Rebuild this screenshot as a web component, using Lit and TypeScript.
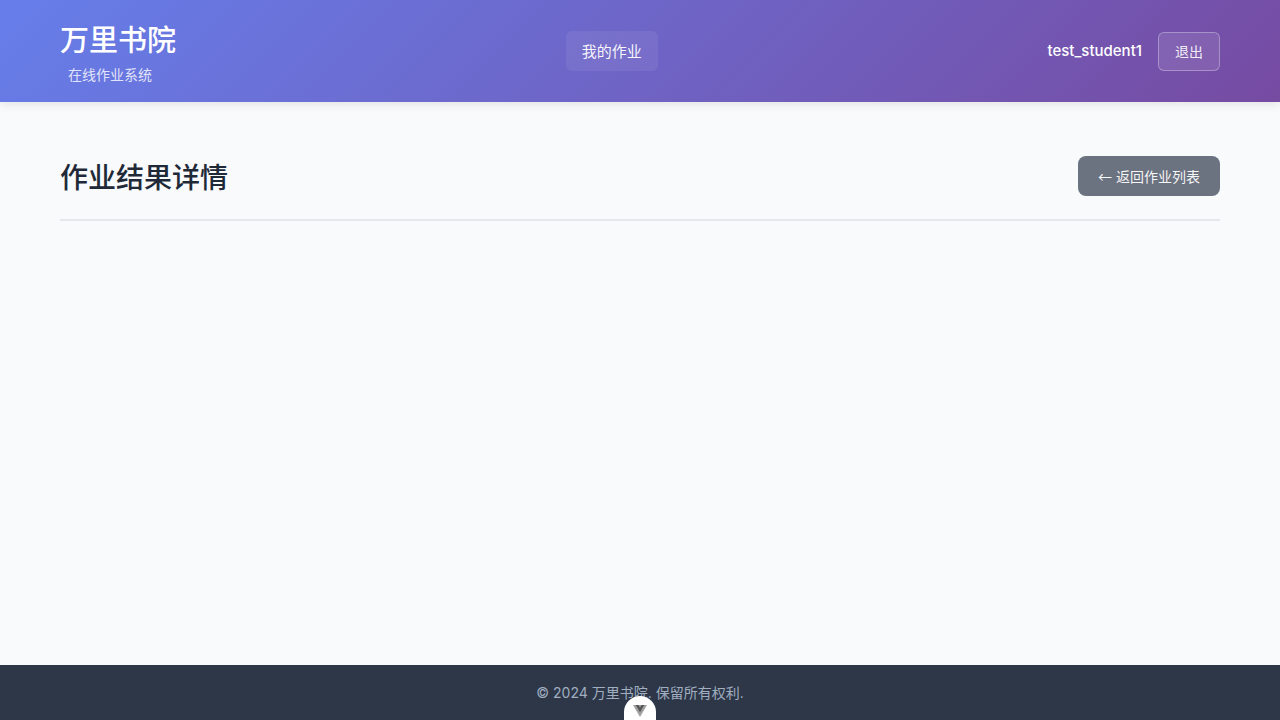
import { LitElement, html, css } from "lit";
import { customElement, property } from "lit/decorators.js";

@customElement("app-root")
export class AppRoot extends LitElement {
  @property() username = "test_student1";

  static styles = css`
    :host {
      display: flex;
      flex-direction: column;
      min-height: 100vh;
      background: #f8fafc;
      color: #1f2937;
      font-family: Inter, "Noto Sans CJK SC", sans-serif;
      font-size: 15px;
      line-height: 24px;
    }
    * {
      box-sizing: border-box;
    }
    h1,
    h2,
    p {
      margin: 0;
    }
    button {
      font: inherit;
      cursor: pointer;
    }
    .header {
      background: linear-gradient(135deg, #667eea 0%, #764ba2 100%);
      color: #fff;
      padding: 16px 0;
      box-shadow: 0 2px 10px rgba(0, 0, 0, 0.1);
    }
    .container {
      width: 100%;
      max-width: 1200px;
      margin: 0 auto;
      padding: 0 20px;
    }
    .bar {
      display: flex;
      align-items: center;
      justify-content: space-between;
    }
    .brand {
      display: flex;
      flex-direction: column;
      gap: 4px;
    }
    .brand-name {
      font-family: "Noto Sans CJK SC", sans-serif;
      font-size: 29px;
      line-height: 44px;
      font-weight: 500;
    }
    .brand-sub {
      margin-left: 8px;
      font-size: 14px;
      line-height: 22px;
      opacity: 0.8;
    }
    .nav-link {
      display: block;
      padding: 8px 16px;
      border-radius: 6px;
      background: rgba(255, 255, 255, 0.07);
      color: rgba(255, 255, 255, 0.95);
      font-family: "Noto Sans CJK SC", sans-serif;
      text-decoration: none;
    }
    .user {
      display: flex;
      align-items: center;
      gap: 16px;
    }
    .user-name {
      font-weight: 500;
    }
    .logout {
      padding: 8px 16px;
      border: 1px solid rgba(255, 255, 255, 0.3);
      border-radius: 6px;
      background: rgba(255, 255, 255, 0.1);
      color: rgba(255, 255, 255, 0.9);
      font-size: 14px;
      line-height: 21px;
    }
    .main {
      flex: 1;
      padding-top: 54px;
      padding-bottom: 32px;
    }
    .page-head {
      display: flex;
      align-items: center;
      justify-content: space-between;
      padding-bottom: 23px;
      border-bottom: 2px solid #e5e7eb;
    }
    .page-title {
      font-family: "Noto Sans CJK SC", sans-serif;
      font-size: 28px;
      line-height: 38px;
      font-weight: 500;
    }
    .back {
      height: 40px;
      padding: 0 20px;
      border: none;
      border-radius: 8px;
      background: #6b7280;
      color: rgba(255, 255, 255, 0.95);
      font-size: 14px;
      line-height: 20px;
    }
    .arrow {
      font-family: "Noto Sans CJK SC", sans-serif;
    }
    .footer {
      padding: 16px 0;
      background: #2d3748;
      color: #a0aec0;
      text-align: center;
      font-size: 14px;
      line-height: 23px;
    }
    .devtools {
      position: fixed;
      bottom: 0;
      left: 50%;
      display: flex;
      justify-content: center;
      width: 32px;
      height: 24px;
      margin-left: -16px;
      padding: 8px 0 0;
      border: none;
      border-radius: 16px 16px 0 0;
      background: #fff;
    }
    .devtools svg {
      display: block;
      width: 14px;
      height: 14px;
    }
  `;

  render() {
    return html`
      <header class="header">
        <div class="container bar">
          <div class="brand">
            <h1 class="brand-name">万里书院</h1>
            <span class="brand-sub">在线作业系统</span>
          </div>
          <nav><a class="nav-link" href="#homework">我的作业</a></nav>
          <div class="user">
            <span class="user-name">${this.username}</span>
            <button class="logout" type="button">退出</button>
          </div>
        </div>
      </header>
      <main class="container main">
        <div class="page-head">
          <h2 class="page-title">作业结果详情</h2>
          <button class="back" type="button"><span class="arrow">←</span> 返回作业列表</button>
        </div>
      </main>
      <footer class="footer">
        <p>© 2024 万里书院. 保留所有权利.</p>
      </footer>
      <button class="devtools" type="button" aria-label="Vue DevTools">
        <svg viewBox="0 0 256 256" aria-hidden="true">
          <path fill="#a0a0a0" d="M0 18H256L128 238.800Z" />
          <path fill="#555555" d="M50.560 18L128 151.120L204.800 18Z" />
          <path fill="#a0a0a0" d="M97.920 18L128 69.200L157.440 18Z" />
        </svg>
      </button>
    `;
  }
}
